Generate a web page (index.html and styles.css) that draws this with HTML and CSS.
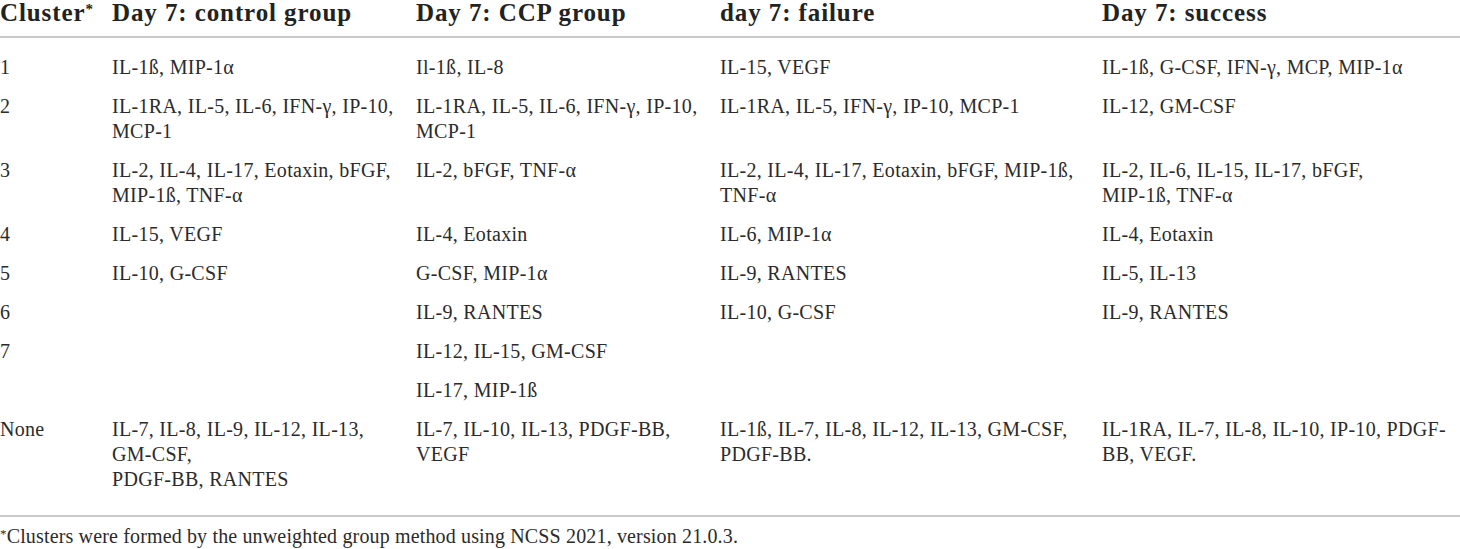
FILE: index.html
```html
<!DOCTYPE html>
<html lang="en">
<head>
    <meta charset="UTF-8">
    <meta name="viewport" content="width=device-width, initial-scale=1.0">
    <title>Cytokine clusters, day 7</title>
    <link rel="stylesheet" href="styles.css">
</head>
<body>
    <table class="cluster-table">
        <colgroup>
            <col class="col-cluster">
            <col class="col-control">
            <col class="col-ccp">
            <col class="col-failure">
            <col class="col-success">
        </colgroup>
        <thead>
            <tr>
                <th>Cluster<sup>*</sup></th>
                <th>Day 7: control group</th>
                <th>Day 7: CCP group</th>
                <th>day 7: failure</th>
                <th>Day 7: success</th>
            </tr>
        </thead>
        <tbody>
            <tr>
                <td>1</td>
                <td>IL-1ß, MIP-1α</td>
                <td>Il-1ß, IL-8</td>
                <td>IL-15, VEGF</td>
                <td>IL-1ß, G-CSF, IFN-γ, MCP, MIP-1α</td>
            </tr>
            <tr>
                <td>2</td>
                <td>IL-1RA, IL-5, IL-6, IFN-γ, IP-10,<br>MCP-1</td>
                <td>IL-1RA, IL-5, IL-6, IFN-γ, IP-10,<br>MCP-1</td>
                <td>IL-1RA, IL-5, IFN-γ, IP-10, MCP-1</td>
                <td>IL-12, GM-CSF</td>
            </tr>
            <tr>
                <td>3</td>
                <td>IL-2, IL-4, IL-17, Eotaxin, bFGF,<br>MIP-1ß, TNF-α</td>
                <td>IL-2, bFGF, TNF-α</td>
                <td>IL-2, IL-4, IL-17, Eotaxin, bFGF, MIP-1ß,<br>TNF-α</td>
                <td>IL-2, IL-6, IL-15, IL-17, bFGF,<br>MIP-1ß, TNF-α</td>
            </tr>
            <tr>
                <td>4</td>
                <td>IL-15, VEGF</td>
                <td>IL-4, Eotaxin</td>
                <td>IL-6, MIP-1α</td>
                <td>IL-4, Eotaxin</td>
            </tr>
            <tr>
                <td>5</td>
                <td>IL-10, G-CSF</td>
                <td>G-CSF, MIP-1α</td>
                <td>IL-9, RANTES</td>
                <td>IL-5, IL-13</td>
            </tr>
            <tr>
                <td>6</td>
                <td></td>
                <td>IL-9, RANTES</td>
                <td>IL-10, G-CSF</td>
                <td>IL-9, RANTES</td>
            </tr>
            <tr>
                <td>7</td>
                <td></td>
                <td>IL-12, IL-15, GM-CSF</td>
                <td></td>
                <td></td>
            </tr>
            <tr>
                <td></td>
                <td></td>
                <td>IL-17, MIP-1ß</td>
                <td></td>
                <td></td>
            </tr>
            <tr class="last-row">
                <td>None</td>
                <td>IL-7, IL-8, IL-9, IL-12, IL-13,<br>GM-CSF,<br>PDGF-BB, RANTES</td>
                <td>IL-7, IL-10, IL-13, PDGF-BB,<br>VEGF</td>
                <td>IL-1ß, IL-7, IL-8, IL-12, IL-13, GM-CSF,<br>PDGF-BB.</td>
                <td>IL-1RA, IL-7, IL-8, IL-10, IP-10, PDGF-<br>BB, VEGF.</td>
            </tr>
        </tbody>
    </table>
    <p class="footnote"><sup>*</sup>Clusters were formed by the unweighted group method using NCSS 2021, version 21.0.3.</p>
</body>
</html>
```

FILE: styles.css
```css
body {
    margin: 0;
    background: #fff;
    color: #2b2b2b;
    font-family: "Liberation Serif", "Times New Roman", serif;
}

.cluster-table {
    width: 100%;
    border-collapse: collapse;
    table-layout: fixed;
}

.col-cluster { width: 112px; }
.col-control { width: 304px; }
.col-ccp { width: 304px; }
.col-failure { width: 382px; }

.cluster-table th {
    text-align: left;
    font-size: 25px;
    font-weight: bold;
    letter-spacing: 0.9px;
    color: #222;
    line-height: 24px;
    padding: 1px 0 11px;
    border-bottom: 2px solid #c9c9c9;
    white-space: nowrap;
}

.cluster-table th sup {
    font-size: 15px;
    vertical-align: 7px;
    line-height: 0;
    letter-spacing: 0;
}

.cluster-table td {
    font-size: 20px;
    letter-spacing: 0.3px;
    line-height: 25px;
    padding: 7px 0;
    vertical-align: top;
    white-space: nowrap;
}

.cluster-table tbody tr:first-child td {
    padding-top: 17px;
}

.cluster-table .last-row td {
    padding-bottom: 23px;
    border-bottom: 2px solid #c9c9c9;
}

.footnote {
    margin: 7px 0 0;
    font-size: 20px;
    letter-spacing: 0.15px;
    line-height: 24px;
}

.footnote sup {
    font-size: 13px;
    vertical-align: 5px;
    line-height: 0;
}
```
